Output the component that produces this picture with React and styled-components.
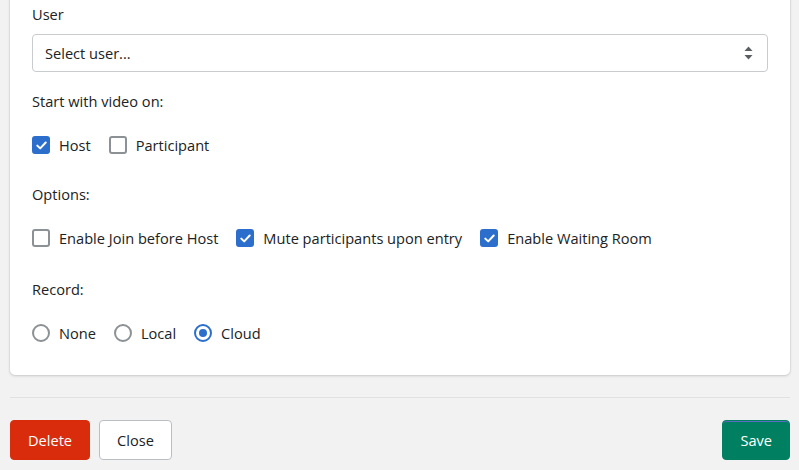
import React from 'react';
import styled, { createGlobalStyle } from 'styled-components';

const GlobalStyle = createGlobalStyle`
  html, body {
    margin: 0;
    padding: 0;
    background: #f2f2f2;
    overflow: hidden;
  }
  body {
    font-family: 'Open Sans', 'Noto Sans', sans-serif;
    font-size: 14.6px;
    color: #202223;
  }
`;

const Page = styled.div`
  padding: 0 9px 0 10px;
  display: flex;
  flex-direction: column;
`;

const Card = styled.div`
  margin-top: -9px;
  background: #fff;
  border-radius: 5px;
  box-shadow: 0 0 0 1px rgba(63, 63, 68, 0.05), 0 1px 3px rgba(63, 63, 68, 0.18);
  padding: 13px 22px 32px;
  display: flex;
  flex-direction: column;
`;

const Group = styled.div`
  display: flex;
  flex-direction: column;
  margin-top: ${p => p.gap || 0}px;
`;

const Label = styled.div`
  line-height: 20px;
  margin-bottom: ${p => p.gap || 24}px;
`;

const SelectBox = styled.div`
  height: 38px;
  box-sizing: border-box;
  border: 1px solid #c9cccf;
  border-radius: 4px;
  display: flex;
  align-items: center;
  justify-content: space-between;
  padding: 0 14px 0 12px;
  color: #202223;
`;

const Row = styled.div`
  display: flex;
  align-items: center;
  gap: 18px;
  height: 20px;
`;

const Choice = styled.label`
  display: flex;
  align-items: center;
  gap: 9px;
  line-height: 20px;
  white-space: nowrap;
`;

const Box = styled.span`
  width: 18px;
  height: 18px;
  box-sizing: border-box;
  border-radius: ${p => (p.round ? '50%' : '3px')};
  border: 2px solid ${p => (p.on ? '#2c6ecb' : '#8c9196')};
  background: ${p => (p.on && !p.round ? '#2c6ecb' : '#fff')};
  display: flex;
  align-items: center;
  justify-content: center;
  flex: none;
`;

const Dot = styled.span`
  width: 8px;
  height: 8px;
  border-radius: 50%;
  background: #2c6ecb;
`;

const Divider = styled.div`
  height: 1px;
  background: #dfe1e3;
  margin-top: 22px;
`;

const Footer = styled.div`
  display: flex;
  align-items: center;
  gap: 9px;
  padding-top: 22px;
`;

const Spacer = styled.div`
  flex: 1;
`;

const Button = styled.button`
  height: 40px;
  box-sizing: border-box;
  padding: 0 ${p => p.pad || 17}px;
  border-radius: 4px;
  font-family: inherit;
  font-size: 14.6px;
  border: 1px solid ${p => p.border || p.bg};
  background: ${p => p.bg};
  color: ${p => p.color || '#fff'};
  box-shadow: ${p => (p.topline ? 'inset 0 1px 0 #5c6ac4' : 'none')};
`;

const Check = () => (
  <svg width="11" height="9" viewBox="0 0 11 9">
    <path d="M1.3 4.6 L4.2 7.4 L9.7 1.5" fill="none" stroke="#fff" strokeWidth="2" strokeLinecap="round" strokeLinejoin="round" />
  </svg>
);

const Arrows = () => (
  <svg width="9" height="14" viewBox="0 0 9 14">
    <path d="M4.5 0.5 L8.5 5 L0.5 5 Z" fill="#5c5f62" />
    <path d="M0.5 9 L8.5 9 L4.5 13.5 Z" fill="#5c5f62" />
  </svg>
);

const CheckItem = ({ on, children }) => (
  <Choice>
    <Box on={on}>{on && <Check />}</Box>
    {children}
  </Choice>
);

const RadioItem = ({ on, children }) => (
  <Choice>
    <Box round on={on}>{on && <Dot />}</Box>
    {children}
  </Choice>
);

export default function App() {
  return (
    <Page>
      <GlobalStyle />
      <Card>
        <Group>
          <Label gap={10}>User</Label>
          <SelectBox>
            <span>Select user...</span>
            <Arrows />
          </SelectBox>
        </Group>
        <Group gap={19}>
          <Label>Start with video on:</Label>
          <Row>
            <CheckItem on>Host</CheckItem>
            <CheckItem>Participant</CheckItem>
          </Row>
        </Group>
        <Group gap={29}>
          <Label>Options:</Label>
          <Row>
            <CheckItem>Enable Join before Host</CheckItem>
            <CheckItem on>Mute participants upon entry</CheckItem>
            <CheckItem on>Enable Waiting Room</CheckItem>
          </Row>
        </Group>
        <Group gap={31}>
          <Label>Record:</Label>
          <Row>
            <RadioItem>None</RadioItem>
            <RadioItem>Local</RadioItem>
            <RadioItem on>Cloud</RadioItem>
          </Row>
        </Group>
      </Card>
      <Divider />
      <Footer>
        <Button bg="#d82c0d">Delete</Button>
        <Button bg="#fff" color="#202223" border="#babfc3">Close</Button>
        <Spacer />
        <Button bg="#008060" topline>Save</Button>
      </Footer>
    </Page>
  );
}
